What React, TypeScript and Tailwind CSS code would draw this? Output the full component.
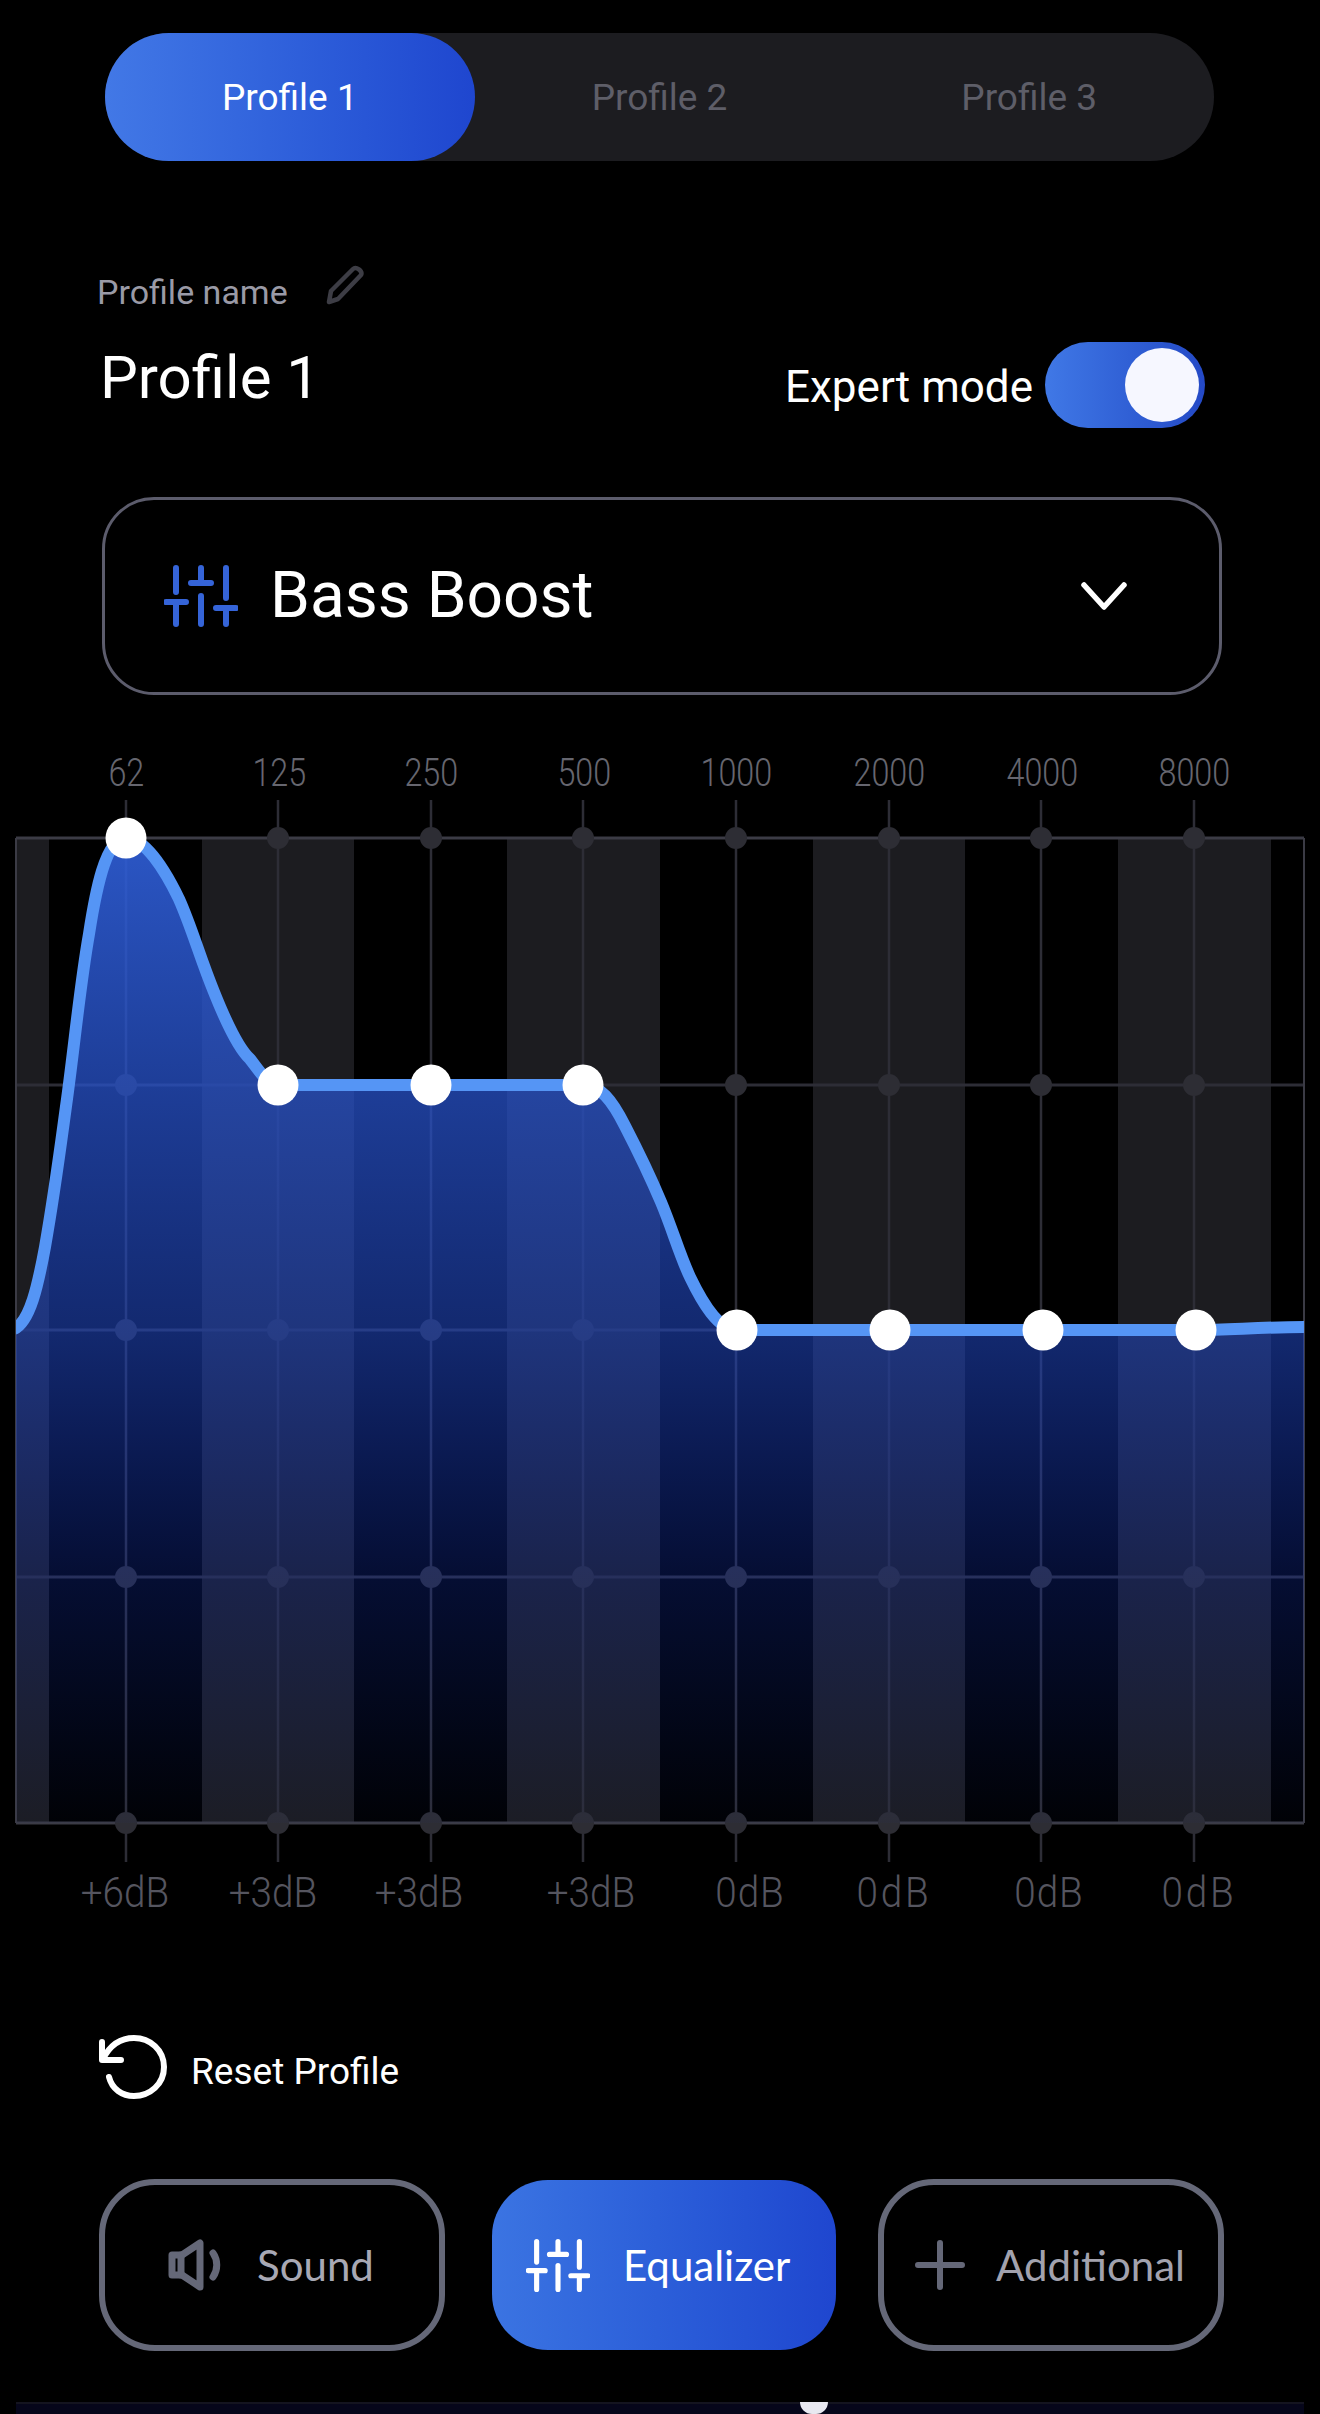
const BANDS = [126, 278, 431, 583, 736, 889, 1041, 1194];
const ROWS = [838, 1085, 1330, 1577, 1823];
const STRIPES = [16, 202, 507, 813, 1118];
const STRIPE_W = [33, 152, 153, 152, 153];
const HANDLES: [number, number][] = [
  [126, 838],
  [278, 1085],
  [431, 1085],
  [583, 1085],
  [737, 1330],
  [890, 1330],
  [1043, 1330],
  [1196, 1330],
];

const CURVE =
  'M14 1329 C30 1322 38 1285 45 1247 C55 1190 60 1150 67 1099 C75 1040 80 985 89 934 C95 895 105 838 126 838 C145 838 165 870 179 899 C192 928 200 958 214 992 C226 1022 240 1050 250 1059 C260 1072 268 1085 278 1085 L583 1085 C600 1085 612 1100 625 1126 C640 1155 650 1176 661 1202 C672 1228 680 1256 690 1277 C702 1302 718 1330 737 1330 L1196 1330 C1230 1330 1260 1327 1306 1327';

const FREQS = ['62', '125', '250', '500', '1000', '2000', '4000', '8000'];

const GAINS = [
  { label: '+6dB', cls: 'w-[150px] ml-[50px]' },
  { label: '+3dB', cls: 'w-[146px]' },
  { label: '+3dB', cls: 'w-[146px]' },
  { label: '+3dB', cls: 'w-[198px]' },
  { label: '0dB', cls: 'w-[120px] tracking-[1px]' },
  { label: '0dB', cls: 'w-[168px] tracking-[3px]' },
  { label: '0dB', cls: 'w-[142px] tracking-[1px]' },
  { label: '0dB', cls: 'w-[158px] tracking-[3px]' },
];

function Sliders({ className }: { className?: string }) {
  return (
    <svg viewBox="0 0 74 62" fill="none" stroke="currentColor" strokeWidth="6" strokeLinecap="round" className={className}>
      <path d="M12 3V27M12 40V59M2 37H22" />
      <path d="M37 3V18M37 31V59M27 18H47" />
      <path d="M62 3V33M62 46V59M52 43H72" />
    </svg>
  );
}

function Speaker({ className }: { className?: string }) {
  return (
    <svg viewBox="0 0 55 52" fill="none" stroke="currentColor" strokeLinejoin="round" strokeLinecap="round" className={className}>
      <path d="M4 16H14L32 4V48L14 36H4Z" strokeWidth="7" />
      <path d="M13 16V36" strokeWidth="7" />
      <path d="M45 14C50 21 50 31 45 38" strokeWidth="7" />
    </svg>
  );
}

function Pencil({ className }: { className?: string }) {
  return (
    <svg viewBox="0 0 40 40" fill="none" stroke="currentColor" strokeWidth="4.5" strokeLinejoin="round" className={className}>
      <path d="M3 37L5 26L27 4C30 1 37 6 35 10L12 34Z" />
    </svg>
  );
}

function ResetIcon({ className }: { className?: string }) {
  return (
    <svg viewBox="0 0 70 64" fill="none" stroke="currentColor" strokeWidth="6" strokeLinecap="round" strokeLinejoin="round" className={className}>
      <path d="M4 7V25H23" />
      <path d="M5 24C12 10 22 3 36 3C52 3 66 15 66 32C66 49 52 61 36 61C24 61 14 54 11 42" />
    </svg>
  );
}

function PlusIcon({ className }: { className?: string }) {
  return (
    <svg viewBox="0 0 50 50" fill="none" stroke="currentColor" strokeWidth="6" strokeLinecap="round" className={className}>
      <path d="M25 3V47M3 25H47" />
    </svg>
  );
}

function EqChart() {
  return (
    <svg viewBox="0 800 1320 1062" className="block h-[1062px] w-[1320px]">
      <defs>
        <linearGradient id="eqFill" gradientUnits="userSpaceOnUse" x1="0" y1="838" x2="0" y2="1823">
          <stop offset="0" stopColor="#2f5ed6" stopOpacity="0.92" />
          <stop offset="0.5" stopColor="#2148c3" stopOpacity="0.57" />
          <stop offset="0.75" stopColor="#1438cc" stopOpacity="0.25" />
          <stop offset="1" stopColor="#1438cc" stopOpacity="0.03" />
        </linearGradient>
        <clipPath id="eqClip">
          <rect x="16" y="780" width="1288" height="1060" />
        </clipPath>
      </defs>

      {STRIPES.map((x, i) => (
        <rect key={x} x={x} y={838} width={STRIPE_W[i]} height={985} fill="#1c1c20" />
      ))}

      {ROWS.map((y, i) => (
        <line key={y} x1="16" x2="1304" y1={y} y2={y} stroke={i === 0 || i === 4 ? '#3b3b45' : '#2d2d36'} strokeWidth="3" />
      ))}
      <line x1="16" x2="16" y1="838" y2="1823" stroke="#3b3b45" strokeWidth="2" />
      <line x1="1304" x2="1304" y1="838" y2="1823" stroke="#3b3b45" strokeWidth="2" />

      {BANDS.map((x) => (
        <g key={x}>
          <line x1={x} x2={x} y1="800" y2="1862" stroke="#2d2d36" strokeWidth="2.5" />
          {ROWS.map((y) => (
            <circle key={y} cx={x} cy={y} r="11" fill="#2d2d34" />
          ))}
        </g>
      ))}

      <path d={`${CURVE} L1306 1823 L14 1823 Z`} fill="url(#eqFill)" clipPath="url(#eqClip)" />
      <path d={CURVE} fill="none" stroke="#5595f5" strokeWidth="12" clipPath="url(#eqClip)" />

      {HANDLES.map(([x, y]) => (
        <circle key={x} cx={x} cy={y} r="20.5" fill="#ffffff" />
      ))}
    </svg>
  );
}

export default function App() {
  return (
    <div className="relative flex h-[2414px] w-[1320px] flex-col overflow-hidden bg-black font-['Roboto',sans-serif] text-white">
      {/* Profile tabs */}
      <div className="ml-[105px] mt-[33px] grid h-[128px] w-[1109px] grid-cols-3 rounded-full bg-[#1c1c20] pt-[1px] text-[37px] text-[#5e5e68]">
        <div className="-mt-[1px] flex items-center justify-center rounded-full bg-gradient-to-r from-[#4278e6] to-[#1f46cf] pt-[1px] text-white">Profile 1</div>
        <div className="flex items-center justify-center">Profile 2</div>
        <div className="flex items-center justify-center">Profile 3</div>
      </div>

      {/* Name + expert mode */}
      <div className="ml-[97px] mt-[101px] flex h-[60px] items-center gap-[38px]">
        <span className="text-[34px] text-[#9a9aa6]">Profile name</span>
        <Pencil className="h-[40px] w-[40px] -translate-y-[7px] text-[#3d3d45]" />
      </div>
      <div className="ml-[100px] mr-[115px] mt-[20px] flex items-start justify-between">
        <span className="mt-[4px] text-[60px] leading-[64px]">Profile 1</span>
        <div className="flex items-center gap-[12px]">
          <span className="translate-y-[2px] text-[44px]">Expert mode</span>
          <div className="flex h-[86px] w-[160px] items-center justify-end rounded-full bg-gradient-to-r from-[#4078e6] to-[#2449c6] pr-[6px]">
            <div className="h-[74px] w-[74px] rounded-full bg-[#f6f7ff]" />
          </div>
        </div>
      </div>

      {/* Preset select */}
      <div className="ml-[102px] mt-[69px] flex h-[198px] w-[1120px] items-center rounded-[52px] border-[3px] border-[#5c5c6c] pl-[59px] pr-[92px]">
        <Sliders className="h-[62px] w-[74px] text-[#3564d8]" />
        <span className="ml-[32px] flex-1 text-[64px]">Bass Boost</span>
        <svg viewBox="0 0 46 28" fill="none" stroke="#ffffff" strokeWidth="5.5" strokeLinecap="round" strokeLinejoin="round" className="h-[28px] w-[46px]">
          <path d="M3 3L23 25L43 3" />
        </svg>
      </div>

      {/* Frequency labels */}
      <div className="ml-[50px] mt-[51px] flex h-[54px] items-center text-[38px] font-light text-[#66666f]">
        {FREQS.map((f) => (
          <span key={f} className="w-[152.6px] scale-x-[0.85] text-center">
            {f}
          </span>
        ))}
      </div>

      <EqChart />

      {/* Gain labels */}
      <div className="mt-[8px] flex h-[44px] items-center text-[42px] font-light text-[#55555f]">
        {GAINS.map((g, i) => (
          <span key={i} className={`${g.cls} scale-x-[0.92] text-center`}>
            {g.label}
          </span>
        ))}
      </div>

      {/* Reset */}
      <div className="ml-[98px] mt-[126px] flex h-[64px] items-center gap-[23px]">
        <ResetIcon className="h-[64px] w-[70px] -translate-y-[5px] text-white" />
        <span className="text-[37px]">Reset Profile</span>
      </div>

      {/* Mode buttons */}
      <div className="ml-[99px] mt-[75px] flex font-['Lato',sans-serif] text-[42px]">
        <div className="flex h-[172px] w-[346px] items-center gap-[34px] rounded-[56px] border-[6px] border-[#656878] pl-[63px] text-[#a8a8b4]">
          <Speaker className="h-[52px] w-[55px] text-[#656878]" />
          <span>Sound</span>
        </div>
        <div className="ml-[47px] flex h-[170px] w-[344px] items-center gap-[33px] self-center rounded-[56px] bg-gradient-to-r from-[#3b74e2] to-[#1f46cf] pl-[34px]">
          <Sliders className="h-[53px] w-[64px] text-white" />
          <span>Equalizer</span>
        </div>
        <div className="ml-[42px] flex h-[172px] w-[346px] items-center gap-[31px] rounded-[56px] border-[6px] border-[#656878] pl-[31px] text-[#a2a2ae]">
          <PlusIcon className="h-[50px] w-[50px] text-[#656878]" />
          <span>Additional</span>
        </div>
      </div>

      {/* Bottom strip */}
      <div className="absolute bottom-0 left-[16px] right-[16px] h-[12px] border-t-[2px] border-[#14141f] bg-[#06061a]" />
      <div className="absolute bottom-0 left-[800px] h-[12px] w-[28px] rounded-b-full bg-[#e8e8f0]" />
    </div>
  );
}
